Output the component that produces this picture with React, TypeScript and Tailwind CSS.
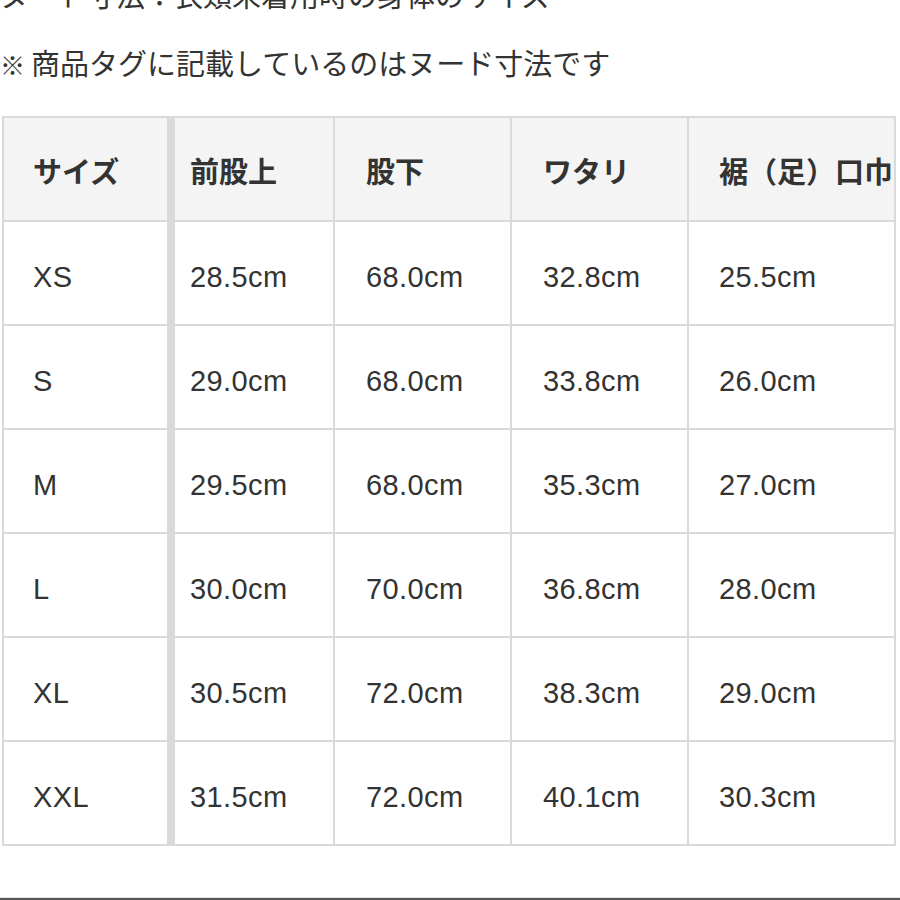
const rows = [
  ['XS', '28.5cm', '68.0cm', '32.8cm', '25.5cm'],
  ['S', '29.0cm', '68.0cm', '33.8cm', '26.0cm'],
  ['M', '29.5cm', '68.0cm', '35.3cm', '27.0cm'],
  ['L', '30.0cm', '70.0cm', '36.8cm', '28.0cm'],
  ['XL', '30.5cm', '72.0cm', '38.3cm', '29.0cm'],
  ['XXL', '31.5cm', '72.0cm', '40.1cm', '30.3cm'],
]

const head = ['サイズ', '前股上', '股下', 'ワタリ', '裾（足）口巾']

// widths include each cell's right border
const cols = [
  'w-[171px] border-r-[8px] pl-[29px]',
  'w-[160px] border-r-2 pl-[15px]',
  'w-[177px] border-r-2 pl-[31px]',
  'w-[177px] border-r-2 pl-[31px]',
  'w-[205px] pl-[30px]',
]

function Row({ cells, header }: { cells: string[]; header?: boolean }) {
  return (
    <div className={`flex h-[104px] border-b-2 border-[#dadada] ${header ? 'bg-[#f4f4f4]' : 'bg-white'}`}>
      {cells.map((c, i) => (
        <div
          key={i}
          className={`${cols[i]} flex shrink-0 items-center overflow-hidden whitespace-nowrap border-[#dadada] pt-[10px] ${header ? 'font-bold' : 'tracking-[0.4px]'}`}
        >
          {c}
        </div>
      ))}
    </div>
  )
}

export default function App() {
  return (
    <div
      className="flex h-[900px] w-[900px] flex-col overflow-hidden bg-white text-[#333]"
      style={{ fontFamily: '"Liberation Sans", "Noto Sans CJK JP", sans-serif' }}
    >
      <div className="-mt-[37px] text-[29px] leading-[68px]">
        <p className="whitespace-nowrap">ヌード寸法：衣類未着用時の身体のサイズ</p>
        <p className="whitespace-nowrap">
          <span className="inline-block w-[31px] text-[25px]">※</span>商品タグに記載しているのはヌード寸法です
        </p>
      </div>

      <div className="ml-[2px] mt-[16px] w-[894px] border-x-2 border-t-2 border-[#dadada] text-[29px]">
        <Row cells={head} header />
        {rows.map((r) => (
          <Row key={r[0]} cells={r} />
        ))}
      </div>

      <div className="mt-auto h-[1px] bg-[#e6e6e6]" />
      <div className="h-[2px] bg-[#555]" />
    </div>
  )
}
